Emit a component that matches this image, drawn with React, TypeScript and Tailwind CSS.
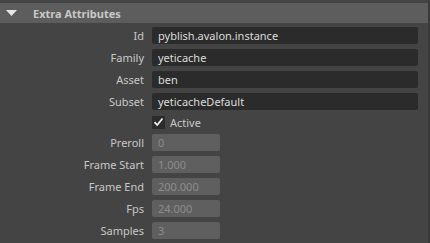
import React from "react";

const TEXT_FIELDS = [
  { label: "Id", value: "pyblish.avalon.instance" },
  { label: "Family", value: "yeticache" },
  { label: "Asset", value: "ben" },
  { label: "Subset", value: "yeticacheDefault" },
];

const NUM_FIELDS = [
  { label: "Preroll", value: "0" },
  { label: "Frame Start", value: "1.000" },
  { label: "Frame End", value: "200.000" },
  { label: "Fps", value: "24.000" },
  { label: "Samples", value: "3" },
];

function Row({ label, children }: { label: string; children: React.ReactNode }) {
  return (
    <div className="flex items-center h-[17px]">
      <div className="w-[144px] shrink-0 text-right text-[#c8c8c8]">{label}</div>
      <div className="ml-[8px] flex-1 flex h-full">{children}</div>
    </div>
  );
}

export default function App() {
  return (
    <div
      className="w-[430px] h-[243px] bg-[#444444] flex text-[11px] leading-none overflow-hidden"
      style={{ fontFamily: '"Noto Sans", "Open Sans", sans-serif' }}
    >
      <div className="flex-1 flex flex-col pt-[3px]">
        {/* Section header */}
        <div className="h-[20px] bg-[#5d5d5d] flex items-center shrink-0">
          <svg width="11" height="6" viewBox="0 0 11 6" className="ml-[6px]">
            <polygon points="0,0 11,0 5.5,6" fill="#e6e6e6" />
          </svg>
          <span className="ml-[16px] font-bold text-[11px] text-[#c8c8c8]">Extra Attributes</span>
        </div>

        <div className="flex flex-col gap-[5px] pt-[4px] pr-[10px]">
          {TEXT_FIELDS.map((f) => (
            <Row key={f.label} label={f.label}>
              <div className="flex-1 bg-[#2b2b2b] rounded-[2px] flex items-center pl-[6px] text-[#dcdcdc]">
                {f.value}
              </div>
            </Row>
          ))}

          <div className="flex items-center h-[14px]">
            <div className="ml-[152px] w-[13px] h-[13px] bg-[#2b2b2b] rounded-[1px] flex items-center justify-center">
              <svg width="11" height="10" viewBox="0 0 11 10">
                <path d="M1.5 5.2 L4.2 8 L9.5 1.5" fill="none" stroke="#f0f0f0" strokeWidth="1.8" />
              </svg>
            </div>
            <span className="ml-[5px] text-[#c8c8c8]">Active</span>
          </div>

          {NUM_FIELDS.map((f) => (
            <Row key={f.label} label={f.label}>
              <div className="w-[68px] bg-[#5f5f5f] rounded-[2px] flex items-center pl-[6px] text-[#8c8c8c]">
                {f.value}
              </div>
            </Row>
          ))}
        </div>
      </div>
      <div className="w-[2px] bg-[#3a3a3a]" />
    </div>
  );
}
